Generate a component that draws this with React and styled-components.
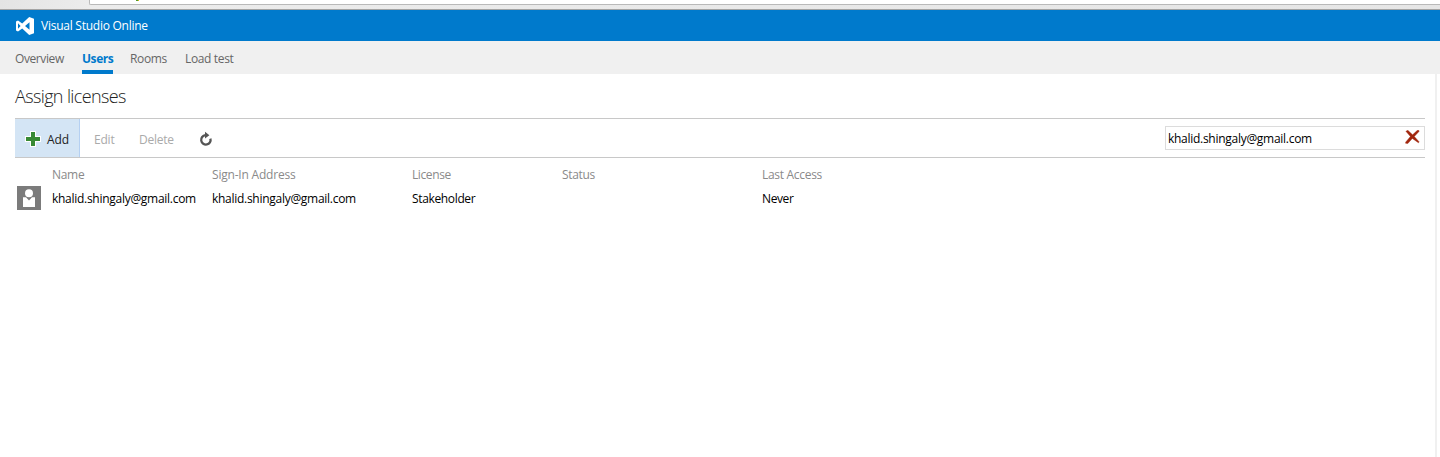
import React from "react";
import styled, { createGlobalStyle } from "styled-components";

const GlobalStyle = createGlobalStyle`
  * { box-sizing: border-box; }
  body { margin: 0; background: #fff; font-family: "Open Sans", "Noto Sans", sans-serif; font-size: 12px; color: #222; overflow: hidden; }
`;

const Page = styled.div`
  height: 457px;
  display: flex;
  flex-direction: column;
  overflow: hidden;
`;

const BrowserEdge = styled.div`
  height: 10px;
  flex: none;
  padding-left: 89px;
  background: linear-gradient(90deg, #e4e4e4, #ececec 90px, #e6e6e6);
  border-bottom: 1px solid #a3a3a3;
`;

const AddressBar = styled.div`
  height: 5px;
  padding-left: 46px;
  background: #fff;
  border: 1px solid #b9b9b9;
  border-top: 0;
  border-right: 0;
  border-bottom-left-radius: 2px;
`;

const AddressMark = styled.div`
  width: 3px;
  height: 1px;
  background: linear-gradient(90deg, #4c9a2a 50%, #e0b21a 50%);
`;

const Header = styled.header`
  height: 31px;
  flex: none;
  display: flex;
  align-items: center;
  padding-left: 16px;
  gap: 7px;
  background: #007acc;
  color: #fff;
`;

const Label = styled.span`
  letter-spacing: ${(p) => p.$track || 0}px;
  white-space: nowrap;
`;

const Tabs = styled.nav`
  height: 33px;
  flex: none;
  display: flex;
  gap: 17px;
  padding-left: 15px;
  background: #f0f0f0;
`;

const Tab = styled.a`
  width: ${(p) => p.$width}px;
  height: 33px;
  line-height: 36px;
  color: ${(p) => (p.$active ? "#007acc" : "#666")};
  font-weight: ${(p) => (p.$active ? 700 : 400)};
  border-bottom: ${(p) => (p.$active ? "4px solid #007acc" : "0")};
`;

const Content = styled.main`
  flex: 1;
  margin-right: 3px;
  padding: 0 10px 0 15px;
  border-right: 2px solid #f0f0f0;
`;

const Title = styled.h1`
  margin: 0;
  height: 44px;
  line-height: 45px;
  font-size: 18px;
  font-weight: 300;
  color: #222;
`;

const Toolbar = styled.div`
  height: 40px;
  display: flex;
  align-items: center;
  border-top: 1px solid #c8c8c8;
  border-bottom: 1px solid #c8c8c8;
`;

const ToolButton = styled.button`
  height: 38px;
  width: ${(p) => p.$width}px;
  display: flex;
  align-items: center;
  gap: 6px;
  padding: 3px 0 0 ${(p) => p.$inset}px;
  border: 0;
  border-right: ${(p) => (p.$highlight ? "1px solid #b5d0f2" : "0")};
  background: ${(p) => (p.$highlight ? "#d4e5f5" : "transparent")};
  color: ${(p) => (p.$highlight ? "#222" : "#aaa")};
  font: inherit;
  svg { display: block; margin-top: -2px; }
`;

const SearchBox = styled.div`
  width: 260px;
  height: 24px;
  margin-left: auto;
  display: flex;
  align-items: center;
  justify-content: space-between;
  padding: 0 4px 0 2px;
  border: 1px solid #dcdcdc;
  color: #000;
  svg { display: block; margin-top: -2px; }
`;

const Grid = styled.div`
  padding-top: 5px;
`;

const Row = styled.div`
  display: grid;
  grid-template-columns: 37px 160px 200px 150px 200px 1fr;
  align-items: center;
  height: ${(p) => (p.$head ? 23 : 24)}px;
  line-height: ${(p) => (p.$head ? "normal" : "15px")};
  color: ${(p) => (p.$head ? "#8a8a8a" : "#000")};
  svg { display: block; margin-left: 2px; }
`;

const LogoIcon = () => (
  <svg width="18" height="18" viewBox="0 0 18 18">
    <path fill="#fff" fillRule="evenodd" d="M13.2 0 18 1.8v14.4L13.2 18 6.2 11.4 2 14.5 0 13.5v-9l2-1 4.2 3.1zM13.5 5.3 9 9l4.5 3.7zM2 6.3v5.4L4.6 9z" />
  </svg>
);

const PlusIcon = () => (
  <svg width="16" height="16" viewBox="0 0 16 16">
    <path d="M5 0h6v5h5v6h-5v5H5v-5H0V5h5z" fill="#fff" />
    <path d="M6 1h4v5h5v4h-5v5H6v-5H1V6h5z" fill="#388a34" />
  </svg>
);

const RefreshIcon = () => (
  <svg width="14" height="16" viewBox="0 0 14 16">
    <path d="M6.4 4.2A4.7 4.7 0 1 0 11.4 7.6" fill="none" stroke="#555" strokeWidth="2.3" />
    <path d="M6 .8 10.4 4.3 6 7.6z" fill="#555" />
  </svg>
);

const ClearIcon = () => (
  <svg width="15" height="14" viewBox="0 0 15 14">
    <path d="M.9 1.3 2.8.3 7.6 4.8 12.4.3 14 .5v1L9.3 6.5l4.9 5.4-.8.9-6.1-4.4-4.5 5.1L.6 13.3v-1.1l4.8-5.6z" fill="#a1260d" stroke="#a1260d" strokeWidth=".4" />
  </svg>
);

const AvatarIcon = () => (
  <svg width="24" height="24" viewBox="0 0 24 24">
    <path fill="#7b7b7b" d="M0 0h24v24H0z" />
    <circle cx="12" cy="7.2" r="4" fill="#fff" />
    <path fill="#fff" d="M6 11.3h3l3 3.2 3-3.2h3V21H6z" />
  </svg>
);

const tabs = [
  { name: "Overview", width: 50, track: -0.4 },
  { name: "Users", width: 31, track: -0.45, active: true },
  { name: "Rooms", width: 38, track: -0.35 },
  { name: "Load test", width: 50, track: -0.35 },
];

const EMAIL = "khalid.shingaly@gmail.com";

export default function App() {
  return (
    <Page>
      <GlobalStyle />
      <BrowserEdge>
        <AddressBar><AddressMark /></AddressBar>
      </BrowserEdge>
      <Header>
        <LogoIcon />
        <Label $track={-0.25}>Visual Studio Online</Label>
      </Header>
      <Tabs>
        {tabs.map((t) => (
          <Tab key={t.name} $width={t.width} $active={t.active}>
            <Label $track={t.track}>{t.name}</Label>
          </Tab>
        ))}
      </Tabs>
      <Content>
        <Title><Label $track={-0.63}>Assign licenses</Label></Title>
        <Toolbar>
          <ToolButton $width={65} $inset={10} $highlight>
            <PlusIcon />
            <Label $track={-0.1}>Add</Label>
          </ToolButton>
          <ToolButton $width={45} $inset={14}><Label $track={-0.2}>Edit</Label></ToolButton>
          <ToolButton $width={59} $inset={14}><Label $track={-0.25}>Delete</Label></ToolButton>
          <ToolButton $width={40} $inset={15} aria-label="Refresh"><RefreshIcon /></ToolButton>
          <SearchBox>
            <Label $track={-0.28}>{EMAIL}</Label>
            <ClearIcon />
          </SearchBox>
        </Toolbar>
        <Grid>
          <Row $head>
            <span />
            <Label $track={-0.3}>Name</Label>
            <Label $track={-0.2}>Sign-In Address</Label>
            <Label $track={-0.4}>License</Label>
            <Label $track={-0.35}>Status</Label>
            <Label $track={-0.3}>Last Access</Label>
          </Row>
          <Row>
            <AvatarIcon />
            <Label $track={-0.28}>{EMAIL}</Label>
            <Label $track={-0.28}>{EMAIL}</Label>
            <Label $track={-0.35}>Stakeholder</Label>
            <span />
            <Label $track={-0.4}>Never</Label>
          </Row>
        </Grid>
      </Content>
    </Page>
  );
}
